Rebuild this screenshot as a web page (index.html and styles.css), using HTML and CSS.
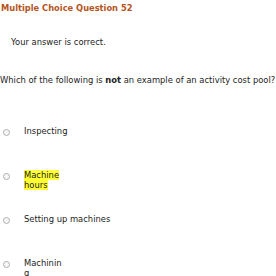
FILE: index.html
```html
<!DOCTYPE html>
<html lang="en">
<head>
    <meta charset="UTF-8">
    <title>Multiple Choice Question 52</title>
    <link rel="stylesheet" href="styles.css">
</head>
<body>
    <div class="question-box">
        <h1 class="title">Multiple Choice Question 52</h1>
        <p class="feedback">Your answer is correct.</p>
        <p class="question">Which of the following is <b>not</b> an example of an activity cost pool?</p>
        <ul class="choices">
            <li class="choice">
                <span class="radio"></span>
                <span class="label">Inspecting</span>
            </li>
            <li class="choice">
                <span class="radio"></span>
                <span class="label"><span class="picked">Machine</span><br><span class="picked">hours</span></span>
            </li>
            <li class="choice">
                <span class="radio"></span>
                <span class="label">Setting up machines</span>
            </li>
            <li class="choice">
                <span class="radio"></span>
                <span class="label">Machinin<br>g</span>
            </li>
        </ul>
    </div>
</body>
</html>
```

FILE: styles.css
```css
body {
    margin: 0;
    background-color: #fff;
    font-family: "DejaVu Sans", Verdana, sans-serif;
    font-size: 8.4px;
    color: #222;
}
.question-box {
    width: 276px;
    height: 276px;
    overflow: hidden;
}
.title {
    margin: 2px 0 0 1px;
    font-size: 8.3px;
    line-height: 12px;
    font-weight: bold;
    color: #b5541c;
    white-space: nowrap;
}
.feedback {
    margin: 23px 0 0 11px;
    line-height: 10px;
}
.question {
    margin: 28px 0 0 0;
    line-height: 10px;
    white-space: nowrap;
}
.choices {
    list-style: none;
    margin: 41px 0 0 0;
    padding: 0;
}
.choice {
    display: flex;
    align-items: flex-start;
    height: 44px;
}
.radio {
    flex-shrink: 0;
    width: 5px;
    height: 5px;
    margin: 3px 14px 0 3px;
    border: 1px solid #b0b0b0;
    border-radius: 50%;
    background-color: #f6f6f6;
}
.label {
    line-height: 10px;
    white-space: nowrap;
}
.picked {
    background-color: #ffff33;
}
```
